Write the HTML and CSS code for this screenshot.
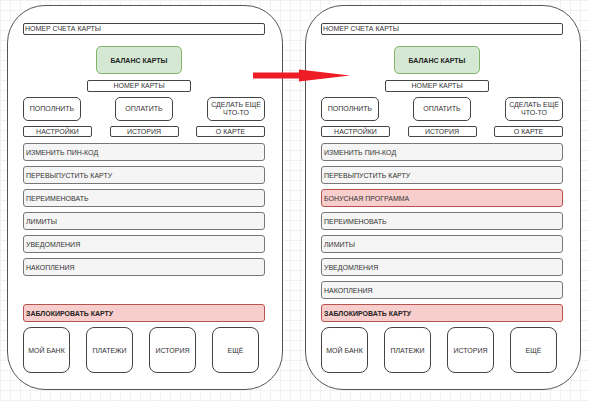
FILE: index.html
```html
<!DOCTYPE html>
<html lang="ru">
<head>
    <meta charset="UTF-8" />
    <meta name="viewport" content="width=device-width, initial-scale=1.0" />
    <title>Экран карты</title>
    <link rel="stylesheet" href="styles.css">
</head>
<body>
    <div class="canvas">
      <!-- Было -->
      <div class="phone">
        <div class="field">НОМЕР СЧЕТА КАРТЫ</div>
        <div class="balance-block">
          <div class="balance">БАЛАНС КАРТЫ</div>
          <div class="card-number">НОМЕР КАРТЫ</div>
        </div>
        <div class="actions">
          <div class="action">ПОПОЛНИТЬ</div>
          <div class="action">ОПЛАТИТЬ</div>
          <div class="action">СДЕЛАТЬ ЕЩЁ<br>ЧТО-ТО</div>
        </div>
        <div class="tabs">
          <div class="tab">НАСТРОЙКИ</div>
          <div class="tab">ИСТОРИЯ</div>
          <div class="tab">О КАРТЕ</div>
        </div>
        <ul class="menu">
          <li class="menu-item">ИЗМЕНИТЬ ПИН-КОД</li>
          <li class="menu-item">ПЕРЕВЫПУСТИТЬ КАРТУ</li>
          <li class="menu-item">ПЕРЕИМЕНОВАТЬ</li>
          <li class="menu-item">ЛИМИТЫ</li>
          <li class="menu-item">УВЕДОМЛЕНИЯ</li>
          <li class="menu-item">НАКОПЛЕНИЯ</li>
        </ul>
        <div class="menu-item block-card">ЗАБЛОКИРОВАТЬ КАРТУ</div>
        <nav class="tabbar">
          <div class="tabbar-item">МОЙ БАНК</div>
          <div class="tabbar-item">ПЛАТЕЖИ</div>
          <div class="tabbar-item">ИСТОРИЯ</div>
          <div class="tabbar-item">ЕЩЁ</div>
        </nav>
      </div>

      <svg class="arrow" width="98" height="15" viewBox="0 0 98 15">
        <rect x="0" y="4.5" width="50" height="6" fill="#ee1c25" />
        <polygon points="46,1.5 97,7.5 46,13.5" fill="#ee1c25" />
      </svg>

      <!-- Стало -->
      <div class="phone">
        <div class="field">НОМЕР СЧЕТА КАРТЫ</div>
        <div class="balance-block">
          <div class="balance">БАЛАНС КАРТЫ</div>
          <div class="card-number">НОМЕР КАРТЫ</div>
        </div>
        <div class="actions">
          <div class="action">ПОПОЛНИТЬ</div>
          <div class="action">ОПЛАТИТЬ</div>
          <div class="action">СДЕЛАТЬ ЕЩЁ<br>ЧТО-ТО</div>
        </div>
        <div class="tabs">
          <div class="tab">НАСТРОЙКИ</div>
          <div class="tab">ИСТОРИЯ</div>
          <div class="tab">О КАРТЕ</div>
        </div>
        <ul class="menu">
          <li class="menu-item">ИЗМЕНИТЬ ПИН-КОД</li>
          <li class="menu-item">ПЕРЕВЫПУСТИТЬ КАРТУ</li>
          <li class="menu-item new">БОНУСНАЯ ПРОГРАММА</li>
          <li class="menu-item">ПЕРЕИМЕНОВАТЬ</li>
          <li class="menu-item">ЛИМИТЫ</li>
          <li class="menu-item">УВЕДОМЛЕНИЯ</li>
          <li class="menu-item">НАКОПЛЕНИЯ</li>
        </ul>
        <div class="menu-item block-card">ЗАБЛОКИРОВАТЬ КАРТУ</div>
        <nav class="tabbar">
          <div class="tabbar-item">МОЙ БАНК</div>
          <div class="tabbar-item">ПЛАТЕЖИ</div>
          <div class="tabbar-item">ИСТОРИЯ</div>
          <div class="tabbar-item">ЕЩЁ</div>
        </nav>
      </div>
    </div>
</body>
</html>
```

FILE: styles.css
```css
* {
  margin: 0;
  padding: 0;
  box-sizing: border-box;
}

body {
  font-family: "Liberation Sans", Arial, sans-serif;
  font-size: 7px;
  color: #333333;
  background-color: #ffffff;
  /* сетка холста */
  background-image:
    linear-gradient(to right, #f1f1f1 1px, transparent 1px),
    linear-gradient(to bottom, #f1f1f1 1px, transparent 1px);
  background-size: 10px 10px;
  height: 100vh;
  overflow: hidden;
}

.canvas {
  position: relative;
  display: flex;
  gap: 22px;
  padding: 5px 0 0 7px;
}

/* Телефон */
.phone {
  width: 276px;
  height: 385px;
  background: #ffffff;
  border: 1px solid #555555;
  border-radius: 38px;
  padding: 17px 17px 16px 15px;
  display: flex;
  flex-direction: column;
}

.field {
  height: 12px;
  border: 1px solid #444444;
  border-radius: 2px;
  background: #ffffff;
  padding-left: 1px;
  line-height: 10px;
  white-space: nowrap;
}

.balance-block {
  display: flex;
  flex-direction: column;
  align-items: center;
  padding-right: 10px;
  margin-top: 11px;
}

.balance {
  width: 86px;
  height: 28px;
  background: #d5e8d4;
  border: 1px solid #82b366;
  border-radius: 5px;
  font-weight: bold;
  color: #222222;
  display: flex;
  justify-content: center;
  align-items: center;
}

.card-number {
  width: 104px;
  height: 12px;
  margin-top: 6px;
  border: 1px solid #444444;
  border-radius: 2px;
  background: #ffffff;
  text-align: center;
  line-height: 10px;
}

.actions {
  display: flex;
  justify-content: space-between;
  margin-top: 5px;
}

.action {
  width: 58px;
  height: 24px;
  border: 1px solid #444444;
  border-radius: 5px;
  background: #ffffff;
  display: flex;
  justify-content: center;
  align-items: center;
  text-align: center;
  line-height: 8px;
}

.tabs {
  display: flex;
  justify-content: space-between;
  margin-top: 5px;
}

.tab {
  width: 69px;
  height: 11px;
  border: 1px solid #444444;
  border-radius: 2px;
  background: #ffffff;
  text-align: center;
  line-height: 9px;
}

.menu {
  list-style: none;
  display: flex;
  flex-direction: column;
  gap: 5px;
  margin-top: 6px;
}

.menu-item {
  height: 18px;
  background: #f5f5f5;
  border: 1px solid #777777;
  border-radius: 3px;
  padding-left: 2px;
  display: flex;
  align-items: center;
  white-space: nowrap;
}

.menu-item.new {
  background: #f8cecc;
  border-color: #b85450;
}

.block-card {
  margin-top: auto;
  background: #f8cecc;
  border-color: #b85450;
  font-weight: bold;
  color: #222222;
}

/* Нижнее меню */
.tabbar {
  display: flex;
  gap: 16px;
  margin-top: 5px;
}

.tabbar-item {
  width: 47px;
  height: 46px;
  border: 1px solid #444444;
  border-radius: 8px;
  background: #ffffff;
  display: flex;
  justify-content: center;
  align-items: center;
  white-space: nowrap;
}

/* Стрелка между экранами */
.arrow {
  position: absolute;
  left: 253px;
  top: 68px;
}
```
